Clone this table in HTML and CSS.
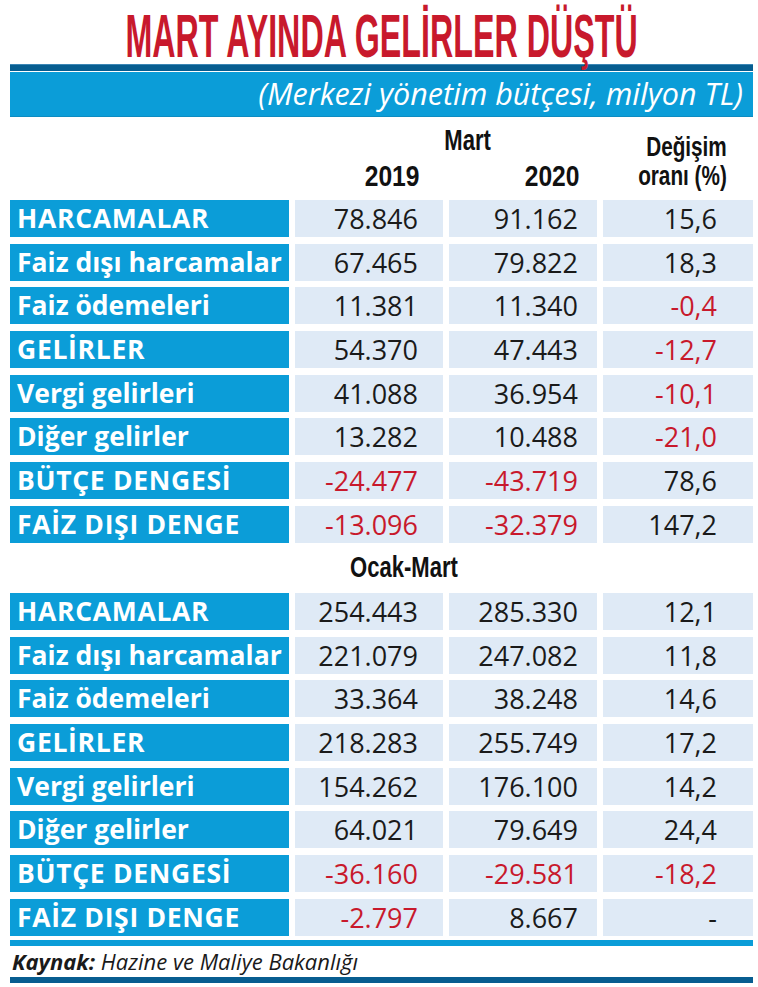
FILE: index.html
```html
<!DOCTYPE html>
<html lang="tr">
  <head>
    <meta charset="UTF-8" />
    <meta name="viewport" content="width=device-width, initial-scale=1.0" />
    <link rel="stylesheet" href="styles.css">
    <title>Mart ayında gelirler düştü</title>
  </head>
  <body>
    <div class="page">
      <h1 class="title"><span>MART AYINDA GELİRLER DÜŞTÜ</span></h1>
      <div class="bar-dark"></div>
      <div class="band">(Merkezi yönetim bütçesi, milyon TL)</div>

      <div class="head">
        <div class="period-top"><span>Mart</span></div>
        <div class="change"><span>Değişim<br />oranı (%)</span></div>
        <div class="year y1"><span>2019</span></div>
        <div class="year y2"><span>2020</span></div>
      </div>

      <div class="table">
        <div class="label caps">HARCAMALAR</div>
        <div class="cell c1">78.846</div>
        <div class="cell c2">91.162</div>
        <div class="cell c3">15,6</div>

        <div class="label">Faiz dışı harcamalar</div>
        <div class="cell c1">67.465</div>
        <div class="cell c2">79.822</div>
        <div class="cell c3">18,3</div>

        <div class="label">Faiz ödemeleri</div>
        <div class="cell c1">11.381</div>
        <div class="cell c2">11.340</div>
        <div class="cell c3 neg">-0,4</div>

        <div class="label caps">GELİRLER</div>
        <div class="cell c1">54.370</div>
        <div class="cell c2">47.443</div>
        <div class="cell c3 neg">-12,7</div>

        <div class="label">Vergi gelirleri</div>
        <div class="cell c1">41.088</div>
        <div class="cell c2">36.954</div>
        <div class="cell c3 neg">-10,1</div>

        <div class="label">Diğer gelirler</div>
        <div class="cell c1">13.282</div>
        <div class="cell c2">10.488</div>
        <div class="cell c3 neg">-21,0</div>

        <div class="label caps">BÜTÇE DENGESİ</div>
        <div class="cell c1 neg">-24.477</div>
        <div class="cell c2 neg">-43.719</div>
        <div class="cell c3">78,6</div>

        <div class="label caps">FAİZ DIŞI DENGE</div>
        <div class="cell c1 neg">-13.096</div>
        <div class="cell c2 neg">-32.379</div>
        <div class="cell c3">147,2</div>
      </div>

      <div class="period"><span>Ocak-Mart</span></div>

      <div class="table">
        <div class="label caps">HARCAMALAR</div>
        <div class="cell c1">254.443</div>
        <div class="cell c2">285.330</div>
        <div class="cell c3">12,1</div>

        <div class="label">Faiz dışı harcamalar</div>
        <div class="cell c1">221.079</div>
        <div class="cell c2">247.082</div>
        <div class="cell c3">11,8</div>

        <div class="label">Faiz ödemeleri</div>
        <div class="cell c1">33.364</div>
        <div class="cell c2">38.248</div>
        <div class="cell c3">14,6</div>

        <div class="label caps">GELİRLER</div>
        <div class="cell c1">218.283</div>
        <div class="cell c2">255.749</div>
        <div class="cell c3">17,2</div>

        <div class="label">Vergi gelirleri</div>
        <div class="cell c1">154.262</div>
        <div class="cell c2">176.100</div>
        <div class="cell c3">14,2</div>

        <div class="label">Diğer gelirler</div>
        <div class="cell c1">64.021</div>
        <div class="cell c2">79.649</div>
        <div class="cell c3">24,4</div>

        <div class="label caps">BÜTÇE DENGESİ</div>
        <div class="cell c1 neg">-36.160</div>
        <div class="cell c2 neg">-29.581</div>
        <div class="cell c3 neg">-18,2</div>

        <div class="label caps">FAİZ DIŞI DENGE</div>
        <div class="cell c1 neg">-2.797</div>
        <div class="cell c2">8.667</div>
        <div class="cell c3">-</div>
      </div>

      <div class="bar-light"></div>
      <p class="source"><b>Kaynak:</b> Hazine ve Maliye Bakanlığı</p>
      <div class="bar-dark bottom"></div>
    </div>
  </body>
</html>
```

FILE: styles.css
```css
body {
  margin: 0;
  background-color: white;
  font-family: "Open Sans", "Noto Sans", sans-serif;
  color: #1a1a1a;
}

.page {
  width: 743px;
  margin-left: 10px;
}

.title {
  margin: 0;
  height: 64px;
  padding-top: 4px;
  box-sizing: border-box;
  text-align: center;
  font-family: "Liberation Sans", Arial, sans-serif;
  font-weight: bold;
  font-size: 62px;
  line-height: 64px;
  color: #c8192c;
  white-space: nowrap;
}

/* squeezed to a condensed face; negative margins give back the width */
.title span {
  display: inline-block;
  margin: 0 -240px;
  transform: scaleX(0.52);
}

.bar-dark {
  height: 7px;
  background-color: #075d90;
  border-top: 1px solid #3b86b5;
  box-sizing: border-box;
}

.band {
  margin-top: 1px;
  height: 45px;
  padding-right: 10px;
  background-color: #0b9dd8;
  border-bottom: 1px solid #0d8cc1;
  box-sizing: border-box;
  text-align: right;
  color: white;
  font-style: italic;
  font-size: 30.5px;
  line-height: 43px;
  white-space: nowrap;
}

/* column heads: narrow bold, squeezed from Liberation Sans */
.head {
  display: grid;
  grid-template-columns: 279px 148px 148px 150px;
  grid-template-rows: 46px 37px;
  column-gap: 6px;
  font-family: "Liberation Sans", Arial, sans-serif;
  font-weight: bold;
  font-size: 29px;
  line-height: 26px;
  color: #111;
}

.head span,
.period span {
  display: inline-block;
  white-space: nowrap;
}

.period-top {
  grid-column: 2 / 4;
  grid-row: 1;
  padding-top: 10px;
  padding-left: 44px;
  text-align: center;
}

.period-top span,
.period span {
  transform: scaleX(0.76);
}

.change {
  grid-column: 4;
  grid-row: 1 / 3;
  padding-top: 15px;
  padding-right: 26px;
  font-size: 28px;
  line-height: 29px;
  text-align: right;
}

.change span {
  transform: scaleX(0.74);
  transform-origin: right;
}

.year {
  grid-row: 2;
  text-align: right;
}

.year span {
  transform: scaleX(0.85);
  transform-origin: right;
}

.y1 {
  grid-column: 2;
  padding-right: 23px;
}

.y2 {
  grid-column: 3;
  padding-right: 17px;
}

.table {
  display: grid;
  grid-template-columns: 279px 148px 148px 150px;
  grid-auto-rows: 37px;
  column-gap: 6px;
  row-gap: 6.7px;
}

.label {
  padding-left: 7px;
  background-color: #0b9dd8;
  color: white;
  font-weight: bold;
  font-size: 26.5px;
  line-height: 37px;
  white-space: nowrap;
}

.caps {
  letter-spacing: 0.7px;
}

.cell {
  background-color: #dfeaf6;
  text-align: right;
  font-size: 27px;
  line-height: 37px;
}

.c1 {
  padding-right: 25px;
}

.c2 {
  padding-right: 19px;
}

.c3 {
  padding-right: 36px;
}

.neg {
  color: #c8192c;
}

.period {
  height: 50px;
  padding-left: 44px;
  text-align: center;
  font-family: "Liberation Sans", Arial, sans-serif;
  font-weight: bold;
  font-size: 29px;
  line-height: 48px;
  color: #111;
}

.bar-light {
  margin-top: 4px;
  height: 6px;
  background-color: #0b9dd8;
}

.source {
  margin: 0;
  height: 31px;
  padding-left: 2px;
  font-style: italic;
  font-size: 22px;
  line-height: 30px;
}

.bottom {
  height: 6px;
  border-top: none;
}
```
